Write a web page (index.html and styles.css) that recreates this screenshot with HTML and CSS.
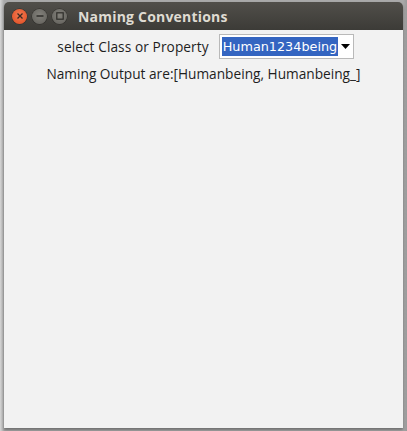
FILE: index.html
```html
<!DOCTYPE html>
<html>
<head>
<meta charset="utf-8">
<link rel="stylesheet" href="styles.css">
</head>
<body>
<div class="window">
  <div class="titlebar">
    <div class="buttons">
      <span class="btn close"><svg width="8" height="8" viewBox="0 0 8 8"><path d="M1.5 1.5 L6.5 6.5 M6.5 1.5 L1.5 6.5" stroke="#3a2a22" stroke-width="1.3"/></svg></span>
      <span class="btn"><svg width="8" height="8" viewBox="0 0 8 8"><path d="M0.5 4 H7.5" stroke="#2e2d2a" stroke-width="1.3"/></svg></span>
      <span class="btn"><svg width="8" height="8" viewBox="0 0 8 8"><rect x="0.8" y="0.8" width="6.4" height="6.4" fill="none" stroke="#2e2d2a" stroke-width="1.2"/></svg></span>
    </div>
    <div class="title">Naming Conventions</div>
  </div>
  <div class="content">
    <div class="row first">
      <span class="label">select Class or Property</span>
      <div class="combo">
        <span class="selected">Human1234being</span>
        <svg class="arrow" width="9" height="5" viewBox="0 0 9 5"><path d="M0 0 H9 L4.5 5 Z" fill="#000"/></svg>
      </div>
    </div>
    <div class="row output">Naming Output are:[Humanbeing, Humanbeing_]</div>
  </div>
</div>
</body>
</html>
```

FILE: styles.css
```css
html, body {
  margin: 0;
  padding: 0;
}
body {
  width: 407px;
  height: 431px;
  background: linear-gradient(to right, #d6d6d6 0px, #a9a9a9 4px, #a9a9a9 403px, #9a9a9a 407px);
  overflow: hidden;
  font-family: "Open Sans", "DejaVu Sans", sans-serif;
}
.window {
  margin: 2px 4px 0 4px;
  width: 399px;
  height: 426px;
  display: flex;
  flex-direction: column;
  box-shadow: 0 2px 3px rgba(0,0,0,0.35);
  border-radius: 5px 5px 0 0;
  overflow: hidden;
}
.titlebar {
  height: 28px;
  flex: none;
  background: linear-gradient(#514f4a, #3c3b37);
  display: flex;
  align-items: center;
  padding-left: 8px;
}
.buttons {
  display: flex;
  gap: 5px;
}
.btn {
  width: 15px;
  height: 15px;
  border-radius: 50%;
  background: radial-gradient(circle at 50% 40%, #83817b, #5f5e59);
  box-shadow: 0 0 0 0.5px #2f2e2b;
  display: flex;
  align-items: center;
  justify-content: center;
}
.btn.close {
  background: radial-gradient(circle at 50% 40%, #f27a52, #df4a1f);
}
.title {
  margin-left: 11px;
  color: #dfdbd2;
  font-weight: bold;
  font-size: 14px;
  letter-spacing: 0.2px;
}
.content {
  flex: 1;
  background: #f2f2f2;
  padding-top: 4px;
  color: #1e1e1e;
  font-size: 13.7px;
}
.row {
  display: flex;
  justify-content: center;
  align-items: center;
}
.row.first {
  padding-left: 4px;
}
.label {
  margin-right: 10px;
  letter-spacing: 0.08px;
}
.combo {
  width: 131px;
  height: 23px;
  border: 1px solid #b9b9b9;
  background: #fff;
  display: flex;
  align-items: center;
  padding-left: 2px;
  box-sizing: content-box;
}
.selected {
  background: #3465c1;
  color: #fff;
  height: 19px;
  line-height: 19px;
  padding: 0 1px;
  font-family: "DejaVu Sans", sans-serif;
  font-size: 12.8px;
}
.arrow {
  margin-left: 3px;
}
.output {
  margin-top: 5px;
}
```
